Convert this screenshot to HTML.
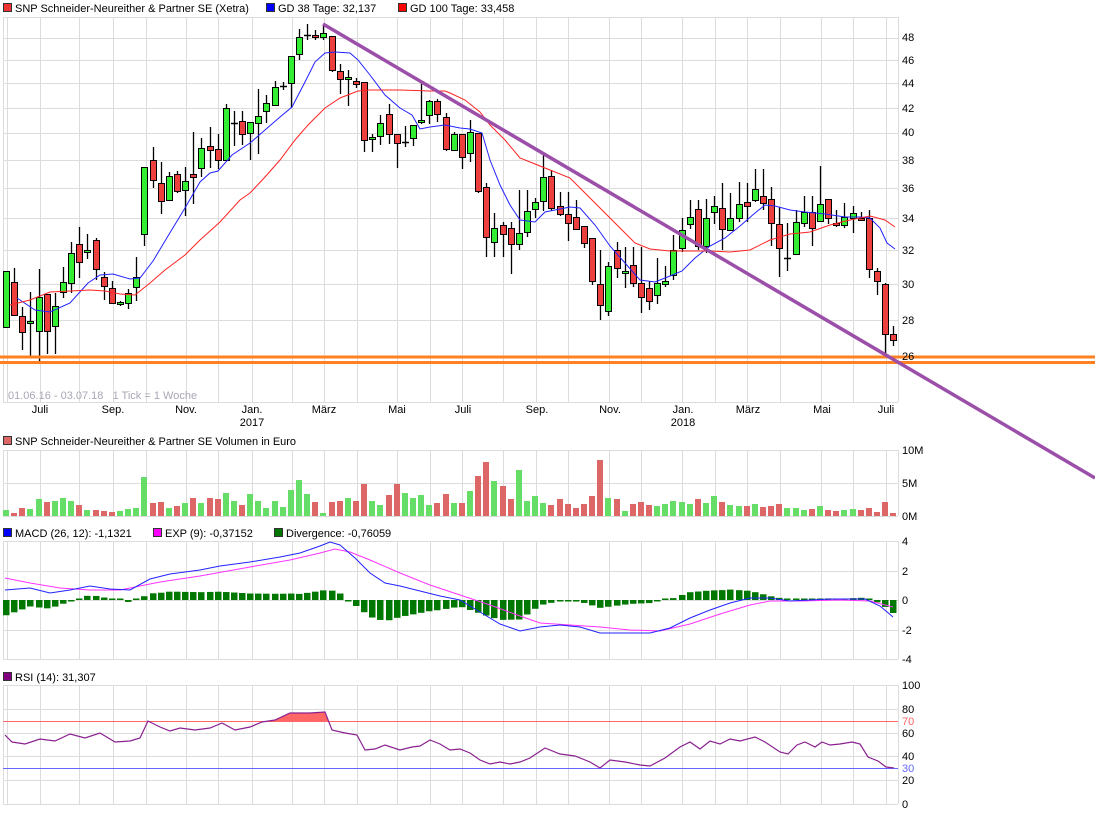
<!DOCTYPE html>
<html><head><meta charset="utf-8"><style>
html,body{margin:0;padding:0;background:#fff;}
svg{display:block;font-family:"Liberation Sans",sans-serif;}
</style></head><body>
<svg id="s" width="1095" height="814" viewBox="0 0 1095 814" xmlns="http://www.w3.org/2000/svg">
<g id="grid" stroke="#dcdcdc" stroke-width="1" fill="none"></g>
<g id="plot"></g>
<g font-size="11" fill="#000">
<rect x="3.5" y="3.5" width="8" height="8" fill="#ee3333" stroke="#333"/><text x="15" y="12">SNP Schneider-Neureither &amp; Partner SE (Xetra)</text>
<rect x="266.5" y="3.5" width="8" height="8" fill="#0000ff" stroke="#333"/><text x="278" y="12">GD 38 Tage: 32,137</text>
<rect x="398.5" y="3.5" width="8" height="8" fill="#ff0000" stroke="#333"/><text x="410" y="12">GD 100 Tage: 33,458</text>
<text x="902" y="41">48</text><text x="902" y="64">46</text><text x="902" y="87">44</text><text x="902" y="112">42</text><text x="902" y="136">40</text><text x="902" y="164">38</text><text x="902" y="192">36</text><text x="902" y="222">34</text><text x="902" y="254">32</text><text x="902" y="288">30</text><text x="902" y="324">28</text><text x="902" y="360">26</text>
<text x="8" y="399" fill="#a8a8b8">01.06.16 - 03.07.18&#160;&#160;&#160;1 Tick = 1 Woche</text>
<text x="40" y="413" text-anchor="middle">Juli</text><text x="113" y="413" text-anchor="middle">Sep.</text><text x="186" y="413" text-anchor="middle">Nov.</text><text x="252" y="413" text-anchor="middle">Jan.</text><text x="252" y="426" text-anchor="middle">2017</text><text x="324" y="413" text-anchor="middle">März</text><text x="397" y="413" text-anchor="middle">Mai</text><text x="463" y="413" text-anchor="middle">Juli</text><text x="537" y="413" text-anchor="middle">Sep.</text><text x="610" y="413" text-anchor="middle">Nov.</text><text x="683" y="413" text-anchor="middle">Jan.</text><text x="683" y="426" text-anchor="middle">2018</text><text x="748" y="413" text-anchor="middle">März</text><text x="822" y="413" text-anchor="middle">Mai</text><text x="886" y="413" text-anchor="middle">Juli</text>
<rect x="3.5" y="436.5" width="8" height="8" fill="#dd6666" stroke="#333"/><text x="15" y="445">SNP Schneider-Neureither &amp; Partner SE Volumen in Euro</text>
<text x="902" y="454">10M</text><text x="902" y="487">5M</text><text x="902" y="520">0M</text>
<rect x="3.5" y="528.5" width="8" height="8" fill="#0000ff" stroke="#333"/><text x="15" y="537">MACD (26, 12): -1,1321</text>
<rect x="153.5" y="528.5" width="8" height="8" fill="#ff00ff" stroke="#333"/><text x="165" y="537">EXP (9): -0,37152</text>
<rect x="274.5" y="528.5" width="8" height="8" fill="#007700" stroke="#333"/><text x="286" y="537">Divergence: -0,76059</text>
<text x="902" y="545">4</text><text x="902" y="575">2</text><text x="902" y="604">0</text><text x="902" y="634">-2</text><text x="902" y="663">-4</text>
<rect x="3.5" y="672.5" width="8" height="8" fill="#800080" stroke="#333"/><text x="15" y="681">RSI (14): 31,307</text>
<text x="902" y="689">100</text><text x="902" y="713">80</text><text x="902" y="725" fill="#ff6666">70</text><text x="902" y="737">60</text><text x="902" y="760">40</text><text x="902" y="772" fill="#6666ff">30</text><text x="902" y="784">20</text><text x="902" y="808">0</text>
</g>
</svg>
<script>
var NS="http://www.w3.org/2000/svg",G=document.getElementById("grid"),P=document.getElementById("plot");
function el(p,t,a){var e=document.createElementNS(NS,t);for(var k in a)e.setAttribute(k,a[k]);p.appendChild(e);return e;}
var vx=[3,7,40,79,113,146,186,218,252,292,324,357,397,430,462,503,536,568,609,641,682,715,747,780,821,853,886,898];
var panels=[[17,402,[38,60,83,108,133,160,188,218,250,284,320,356]],[450,516,[483]],[541,659,[571,600,630]],[685,804,[709,733,756,780]]];
panels.forEach(function(p){
 vx.forEach(function(x){el(G,"line",{x1:x+.5,x2:x+.5,y1:p[0],y2:p[1]});});
 [p[0],p[1]].concat(p[2]).forEach(function(y){el(G,"line",{x1:3,x2:898,y1:y+.5,y2:y+.5});});
});
var C=[[271,327,271,327,1],[282,315,268,315,0],[316,332,307,350,0],[321,323,292,356,1],[297,331,269,361,1],[294,331,294,354,0],[306,326,293,354,1],[282,292,267,298,1],[253,283,242,293,1],[244,262,227,278,0],[250,252,234,259,1],[240,269,238,280,0],[277,286,272,300,0],[288,303,281,303,0],[302,304,301,306,1],[293,303,289,309,1],[277,287,257,301,1],[167,234,167,246,1],[160,180,147,188,0],[183,201,162,214,0],[176,200,172,200,1],[174,191,171,193,0],[181,190,167,216,1],[174,177,132,204,0],[148,168,138,177,1],[146,150,127,168,0],[149,160,134,169,0],[108,160,104,160,1],[123,124,111,146,2],[121,134,111,145,0],[122,133,122,160,1],[116,123,89,154,1],[103,111,95,123,1],[87,105,81,106,1],[86,86,82,90,2],[56,83,56,108,1],[37,54,29,60,1],[35,36,24,40,2],[35,37,30,40,0],[33,37,25,40,1],[36,70,36,72,0],[71,79,64,94,0],[77,79,70,106,1],[81,84,78,88,0],[82,140,82,152,0],[137,139,134,152,1],[123,136,115,145,1],[114,134,104,144,0],[134,143,134,168,0],[142,143,126,147,2],[125,138,125,146,1],[120,122,84,124,1],[101,115,100,124,1],[101,114,99,122,0],
[117,149,113,151,0],[134,150,132,150,1],[134,157,134,169,0],[132,153,120,162,1],[133,191,133,193,0],[187,237,183,257,0],[228,242,213,257,1],[225,234,222,257,0],[228,244,222,274,0],[233,244,190,250,1],[211,232,190,237,1],[202,209,198,218,1],[177,201,155,211,1],[176,208,170,211,0],[206,214,192,216,0],[214,223,192,241,0],[217,229,200,229,0],[226,243,226,248,0],[238,281,238,285,0],[284,305,250,320,0],[266,311,262,316,1],[250,268,242,278,0],[271,273,247,288,1],[265,283,247,287,0],[283,297,247,313,0],[288,301,281,310,0],[283,295,258,304,1],[281,284,266,287,1],[250,275,235,280,1],[230,248,218,252,1],[217,224,200,229,1],[209,246,200,250,0],[218,246,199,253,1],[206,212,196,224,1],[208,229,183,250,0],[218,230,193,231,1],[204,218,182,222,1],[202,206,183,222,0],[189,200,169,202,1],[196,203,169,210,0],[199,223,187,246,0],[224,248,207,277,0],[258,258,223,271,2],[222,254,210,254,1],[212,223,196,227,1],[212,228,196,246,0],[204,221,166,221,1],[199,218,199,224,0],[223,225,210,227,0],[217,225,203,228,1],[213,218,206,233,1],[218,220,212,218,0],[218,269,210,278,0],[271,281,268,295,0],[284,334,283,355,0],[334,340,326,346,0]];
function X(i){return Math.round(6+i*8.14);}
var V=[6,3,8,7,17,14,15,18,15,11,6,6,5,4,5,7,8,39,13,14,8,10,13,18,13,18,17,23,15,11,22,15,8,15,9,26,36,22,14,3,14,15,18,15,32,15,11,21,32,23,18,21,11,13,
22,13,13,25,40,54,35,30,17,46,15,20,13,11,17,12,8,12,20,56,18,17,5,12,14,11,10,12,15,14,12,17,13,20,14,11,10,10,12,9,10,12,8,8,6,7,10,6,5,6,7,6,8,4,14,3];
C.forEach(function(c,i){var x=X(i);
 el(P,"line",{x1:x+.5,x2:x+.5,y1:c[2],y2:c[3],stroke:"#000","stroke-width":1.3});
 var h=Math.max(c[1]-c[0],1);
 if(c[4]==2) el(P,"line",{x1:x-3,x2:x+4,y1:c[0]+.5,y2:c[0]+.5,stroke:"#000","stroke-width":1.5});
 else el(P,"rect",{x:x-2.5,y:c[0]+.5,width:6,height:h,fill:c[4]?"#33ee33":"#ee3f3f",stroke:"#000","stroke-width":1});
 var v=V[i]||6;
 el(P,"rect",{x:x-3,y:516-v,width:6,height:v,fill:c[4]==0?"#dd6666":"#66dd66"});
});
function pl(pts,col,w){el(P,"polyline",{points:pts,fill:"none",stroke:col,"stroke-width":w||1});}
pl("17,298 35,310 50,312 70,303 88,283 100,275 113,274 130,279 140,278 153,261 168,236 185,208 200,182 210,173 218,171 232,155 250,143 265,130 280,117 292,107 305,82 315,62 325,53 335,52 350,53 358,60 370,75 385,95 400,108 412,115 420,129 430,127 445,125 460,128 470,129 482,133 490,160 500,185 510,205 520,220 535,222 545,212 555,210 570,207 580,208 595,225 610,246 625,263 640,280 655,282 670,276 682,271 695,258 710,246 725,238 740,226 755,213 765,205 775,206 790,210 805,212 825,214 845,217 860,217 870,218 880,228 887,243 895,249","#2222ff");
pl("10,305 30,300 50,292 70,291 90,290 105,291 120,294 135,295 150,283 165,270 185,255 200,240 220,222 240,200 250,193 265,177 280,160 295,140 308,125 325,108 340,98 358,91 370,90 400,90 430,91 445,91 450,93 465,100 480,112 490,125 505,140 520,158 535,164 550,170 570,178 585,193 600,208 620,228 635,243 650,249 670,251 690,251 710,251 730,252 750,250 770,240 790,234 810,232 830,225 850,220 870,216 885,220 895,227","#ff2222");
el(P,"line",{x1:0,x2:1095,y1:357,y2:357,stroke:"#ff8020","stroke-width":3});
el(P,"line",{x1:0,x2:1095,y1:362.5,y2:362.5,stroke:"#ff8020","stroke-width":3});
el(P,"line",{x1:323,y1:24,x2:1095,y2:478,stroke:"#9b4fa8","stroke-width":3.5});
var mac=[[5,590],[30,588],[50,593],[70,590],[90,586],[110,589],[130,590],[150,579],[170,574],[200,570],[220,566],[250,562],[280,557],[300,553],[320,546],[330,542],[340,545],[355,558],[370,573],[385,583],[400,586],[420,591],[440,596],[460,600],[480,612],[500,624],[520,631],[540,627],[560,625],[580,627],[600,633],[630,633],[650,633],[670,628],[690,618],[710,610],[730,603],[750,598],[770,598],[790,601],[810,600],[830,599],[850,599],[865,599],[880,606],[893,617]];
var ex=[[5,578],[30,583],[60,588],[90,590],[120,590],[140,586],[160,582],[200,576],[250,567],[290,560],[320,553],[335,549],[350,552],[370,560],[400,573],[430,585],[460,595],[490,605],[520,616],[540,623],[570,625],[600,627],[630,630],[660,631],[690,624],[720,614],[750,605],[770,601],[800,601],[840,600],[870,601],[893,607]];
function itp(a,x){for(var i=1;i<a.length;i++)if(x<=a[i][0]){var t=(x-a[i-1][0])/(a[i][0]-a[i-1][0]);return a[i-1][1]+t*(a[i][1]-a[i-1][1]);}return a[a.length-1][1];}
for(var i=0;i<110;i++){var x=X(i),d=(itp(ex,x)-itp(mac,x))*1.3;var h=Math.max(Math.abs(d),1.5);
 el(P,"rect",{x:x-3,y:d>0?600-h:600,width:6.5,height:h,fill:"#007700"});}
pl(ex.join(" "),"#ff33ff");pl(mac.join(" "),"#2222ff");
el(P,"line",{x1:3,x2:898,y1:721.5,y2:721.5,stroke:"#ff6666"});
el(P,"line",{x1:3,x2:898,y1:768.5,y2:768.5,stroke:"#6666ff"});
el(P,"polygon",{points:"272,721 280,718 290,713 310,713 325,712 328,721",fill:"#ff6666"});
pl("5,735 12,742 25,744 40,739 55,741 70,734 85,738 100,733 115,742 130,741 140,738 148,721 160,727 170,731 180,728 195,730 210,728 222,723 235,730 250,727 262,722 275,720 290,713 300,713 310,713 325,712 332,730 345,733 357,735 365,750 375,749 385,745 400,750 412,747 420,746 430,740 440,744 450,750 460,749 470,753 480,760 490,764 500,762 510,764 520,762 530,758 545,748 560,754 575,756 590,762 600,768 610,760 625,762 640,765 650,766 665,758 680,747 690,742 700,749 710,741 720,744 730,739 740,741 755,737 765,742 780,752 788,754 797,745 805,742 815,747 822,742 830,745 840,744 852,742 860,744 868,757 878,761 886,767 894,768","#8a2090",1.2);
</script>
</body></html>
